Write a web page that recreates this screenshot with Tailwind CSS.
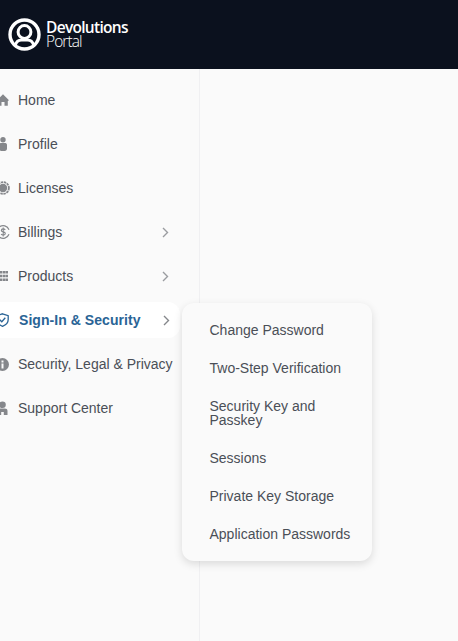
<!DOCTYPE html>
<html lang="en">
<head>
    <meta charset="UTF-8">
    <meta name="viewport" content="width=device-width, initial-scale=1.0">
    <title>Devolutions Portal</title>
    <script src="https://cdn.jsdelivr.net/npm/@tailwindcss/browser@4"></script>
</head>
<body class="h-[641px] overflow-hidden bg-[#fafafa] font-['Liberation_Sans',sans-serif] text-[14px] text-[#4a4f57]">
    <header class="h-[69px] bg-[#0b111e] flex items-center pl-[8px] gap-[6px]">
        <svg class="w-[33px] h-[33px]" viewBox="0 0 33 33" fill="none" stroke="#fff">
            <circle cx="16.500" cy="16.500" r="14.500" stroke-width="3.400"/>
            <circle cx="16.500" cy="14" r="6.400" stroke-width="3"/>
            <path d="M7.500 27c.8-3.500 3.500-5 6-5h6c2.500 0 5.200 1.500 6 5" stroke-width="2.800"/>
        </svg>
        <div class="font-['Open_Sans',sans-serif] text-white leading-[14px] mt-[-1px] ml-[-1px]">
            <div class="text-[15.500px] font-semibold tracking-[-0.7px]">Devolutions</div>
            <div class="text-[15.500px] font-light tracking-[-0.9px]">Portal</div>
        </div>
    </header>

    <div class="relative flex h-[572px]">
        <nav class="w-[200px] h-full border-r border-[#f0f0f2] pt-[9px] overflow-hidden">
            <a class="h-[44px] flex items-center">
                <svg class="w-[12px] h-[12px] ml-[-3px] mr-[9px]" viewBox="0 0 12 12" fill="#85878b"><path d="M6 .3 12 6.200 10.800 7v4.800H7.500V8h-3v3.800H1.200V7L0 6.200z"/></svg>
                <span>Home</span>
            </a>
            <a class="h-[44px] flex items-center">
                <svg class="w-[12px] h-[14px] ml-[-3px] mr-[9px]" viewBox="0 0 12 14" fill="#85878b"><circle cx="6" cy="2.800" r="2.700"/><path d="M2 8c0-1.500 1-2 2.200-2h3.600C9 6 10 6.500 10 8v3.500c0 1.500-1 2.500-2.200 2.500H4.200C3 14 2 13 2 11.500z"/></svg>
                <span>Profile</span>
            </a>
            <a class="h-[44px] flex items-center">
                <svg class="w-[14px] h-[14px] ml-[-4px] mr-[8px]" viewBox="0 0 14 14" fill="none" stroke="#85878b"><circle cx="7" cy="7" r="4.200" fill="#85878b" stroke="none"/><circle cx="7" cy="7" r="5.900" stroke-width="1.800" stroke-dasharray="2.400 .7"/></svg>
                <span>Licenses</span>
            </a>
            <a class="h-[44px] flex items-center">
                <svg class="w-[14px] h-[14px] ml-[-4px] mr-[8px]" viewBox="0 0 14 14" fill="none" stroke="#85878b"><path d="M13 4.700A6.300 6.300 0 1 0 13 9.300" stroke-width="1.200"/><path d="M9.200 5C8.800 4.200 8 3.900 7.200 3.900c-1.100 0-1.900.5-1.900 1.500 0 2 4 1 4 3.100 0 1-.9 1.600-2.100 1.600-.9 0-1.700-.4-2.100-1.100M7.200 2.500v9" stroke-width="1.100"/></svg>
                <span>Billings</span>
                <svg class="w-[8px] h-[11px] ml-auto mr-[30px]" viewBox="0 0 8 11" fill="none" stroke="#9a9ca0" stroke-width="1.400"><path d="M2 1l4.500 4.500L2 10"/></svg>
            </a>
            <a class="h-[44px] flex items-center">
                <svg class="w-[8px] h-[10px] mr-[10px]" viewBox="0 0 8 10" fill="#85878b"><path d="M0 0h2.400v2.600H0zM2.900 0h2.400v2.600H2.900zM5.600 0H8v2.600H5.600zM0 3.700h2.400v2.600H0zM2.900 3.700h2.400v2.600H2.900zM5.600 3.700H8v2.600H5.600zM0 7.400h2.400V10H0zM2.900 7.400h2.400V10H2.900zM5.600 7.400H8V10H5.600z"/></svg>
                <span>Products</span>
                <svg class="w-[8px] h-[11px] ml-auto mr-[30px]" viewBox="0 0 8 11" fill="none" stroke="#9a9ca0" stroke-width="1.400"><path d="M2 1l4.500 4.500L2 10"/></svg>
            </a>
            <a class="h-[36px] my-[4px] w-[180px] bg-white rounded-r-[12px] flex items-center font-bold text-[#2a6496]">
                <svg class="w-[13px] h-[14px] ml-[-4px] mr-[10px]" viewBox="0 0 13 14" fill="none" stroke="#2a6496" stroke-width="1.300"><path d="M6.500 .8 12.200 2.700V6.500c0 3.200-2.400 5.600-5.700 6.800C3.200 12.100.8 9.700.8 6.500V2.700z"/><path d="M3.800 6.800 5.800 8.800 9.300 4.800"/></svg>
                <span class="tracking-[.05px]">Sign-In &amp; Security</span>
                <svg class="w-[8px] h-[11px] ml-auto mr-[10px]" viewBox="0 0 8 11" fill="none" stroke="#85878b" stroke-width="1.400"><path d="M2 1l4.500 4.500L2 10"/></svg>
            </a>
            <a class="h-[44px] flex items-center">
                <svg class="w-[13px] h-[13px] ml-[-4px] mr-[9px]" viewBox="0 0 13 13"><circle cx="6.500" cy="6.500" r="6.500" fill="#85878b"/><path d="M5.500 2.500h2v2h-2zM5.500 5.500h2v5h-2z" fill="#fafafa"/></svg>
                <span class="whitespace-nowrap">Security, Legal &amp; Privacy</span>
            </a>
            <a class="h-[44px] flex items-center">
                <svg class="w-[13px] h-[14px] ml-[-4px] mr-[9px]" viewBox="0 0 13 14" fill="#85878b"><circle cx="6.500" cy="3.700" r="3.300"/><path d="M1.500 14V9.800C1.500 8.300 2.700 7.600 4.200 7.600h4.600c1.500 0 2.700.7 2.700 2.200V14H7.800v-3H5.200v3z"/></svg>
                <span>Support Center</span>
            </a>
        </nav>

        <!-- flyout over the page -->
        <div class="absolute left-[182px] top-[234px] w-[190px] h-[258px] bg-[#fafafa] rounded-[12px] shadow-[0_3px_8px_rgba(0,0,0,0.13)] pt-[8px] pl-[27.500px] pr-[20px] leading-[14px]">
            <div class="h-[38px] flex items-center">Change Password</div>
            <div class="h-[38px] flex items-center">Two-Step Verification</div>
            <div class="h-[52px] flex items-center">Security Key and Passkey</div>
            <div class="h-[38px] flex items-center">Sessions</div>
            <div class="h-[38px] flex items-center">Private Key Storage</div>
            <div class="h-[38px] flex items-center whitespace-nowrap">Application Passwords</div>
        </div>
    </div>
</body>
</html>
